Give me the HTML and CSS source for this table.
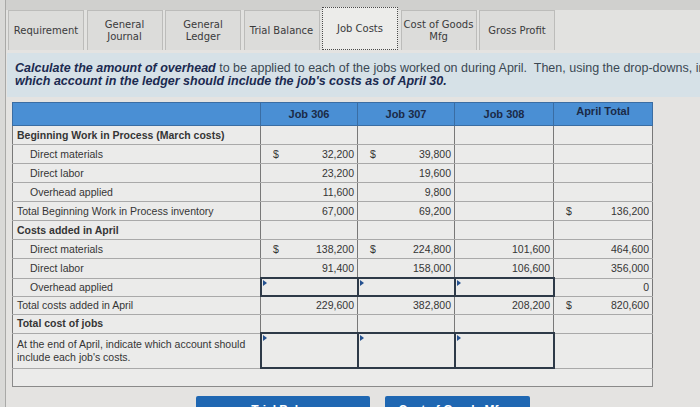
FILE: index.html
```html
<!DOCTYPE html>
<html>
<head>
<meta charset="utf-8">
<link rel="stylesheet" href="styles.css">
</head>
<body>
<div class="page">
  <div class="tabs">
    <div class="tab">Requirement</div>
    <div class="tab">General<br>Journal</div>
    <div class="tab">General<br>Ledger</div>
    <div class="tab">Trial Balance</div>
    <div class="tab active">Job Costs</div>
    <div class="tab">Cost of Goods<br>Mfg</div>
    <div class="tab">Gross Profit</div>
  </div>
  <div class="instr"><b>Calculate the amount of overhead</b> to be applied to each of the jobs worked on during April.&nbsp; Then, using the drop-downs, indicate<br><b>which account in the ledger should include the job's costs as of April 30.</b></div>
  <div class="sheet">
    <table class="grid">
      <colgroup><col class="c-lbl"><col class="c-job"><col class="c-job"><col class="c-job3"><col class="c-job3"></colgroup>
      <tr class="head"><th></th><th>Job 306</th><th>Job 307</th><th>Job 308</th><th class="total">April Total</th></tr>
      <tr><td class="lbl b">Beginning Work in Process (March costs)</td><td></td><td></td><td></td><td></td></tr>
      <tr><td class="lbl sub">Direct materials</td><td class="num"><div><span>$</span><span>32,200</span></div></td><td class="num"><div><span>$</span><span>39,800</span></div></td><td></td><td></td></tr>
      <tr><td class="lbl sub">Direct labor</td><td class="num"><div><span></span><span>23,200</span></div></td><td class="num"><div><span></span><span>19,600</span></div></td><td></td><td></td></tr>
      <tr><td class="lbl sub">Overhead applied</td><td class="num"><div><span></span><span>11,600</span></div></td><td class="num"><div><span></span><span>9,800</span></div></td><td></td><td></td></tr>
      <tr><td class="lbl">Total Beginning Work in Process inventory</td><td class="num"><div><span></span><span>67,000</span></div></td><td class="num"><div><span></span><span>69,200</span></div></td><td></td><td class="num"><div><span>$</span><span>136,200</span></div></td></tr>
      <tr><td class="lbl b">Costs added in April</td><td></td><td></td><td></td><td></td></tr>
      <tr><td class="lbl sub">Direct materials</td><td class="num"><div><span>$</span><span>138,200</span></div></td><td class="num"><div><span>$</span><span>224,800</span></div></td><td class="num"><div><span></span><span>101,600</span></div></td><td class="num"><div><span></span><span>464,600</span></div></td></tr>
      <tr><td class="lbl sub">Direct labor</td><td class="num"><div><span></span><span>91,400</span></div></td><td class="num"><div><span></span><span>158,000</span></div></td><td class="num"><div><span></span><span>106,600</span></div></td><td class="num"><div><span></span><span>356,000</span></div></td></tr>
      <tr class="inrow"><td class="lbl sub">Overhead applied</td><td class="inp"></td><td class="inp"></td><td class="inp"></td><td class="num"><div><span></span><span>0</span></div></td></tr>
      <tr class="low"><td class="lbl">Total costs added in April</td><td class="num"><div><span></span><span>229,600</span></div></td><td class="num"><div><span></span><span>382,800</span></div></td><td class="num"><div><span></span><span>208,200</span></div></td><td class="num"><div><span>$</span><span>820,600</span></div></td></tr>
      <tr class="low"><td class="lbl b">Total cost of jobs</td><td></td><td></td><td></td><td></td></tr>
      <tr class="tall"><td class="lbl">At the end of April, indicate which account should<br>include each job's costs.</td><td class="inp"></td><td class="inp"></td><td class="inp"></td><td></td></tr>
      <tr class="low"><td class="full" colspan="5"></td></tr>
    </table>
  </div>
  <div class="nav">
    <button class="btn prev">&lsaquo;&nbsp; Trial Balance</button>
    <button class="btn next">Cost of Goods Mfg &nbsp;&rsaquo;</button>
  </div>
</div>
</body>
</html>
```

FILE: styles.css
```css
html, body {
  margin: 0;
  height: 100%;
  overflow: hidden;
}
body {
  background: #d9d9d7;
  font-family: "Liberation Sans", Arial, sans-serif;
}
.page {
  margin-left: 5px;
  border-left: 1px solid #a9a9a7;
  min-height: 100%;
  background: #e4e3e1;
}
.tabs {
  display: flex;
  align-items: flex-end;
  gap: 2.5px;
  padding: 10px 0 0 2px;
  background: linear-gradient(#d0d0ce 0 10px, #e2e2e0 10px);
}
.tab {
  width: 76px;
  height: 40px;
  box-sizing: border-box;
  border: 1px solid #bcbcba;
  border-bottom: none;
  background: #dcdcda;
  display: flex;
  align-items: center;
  justify-content: center;
  text-align: center;
  font: 10px/12px "DejaVu Sans", sans-serif;
  color: #3a3a3a;
}
.tab.active {
  height: 43px;
  margin-top: -3px;
  background: #ececea;
  border: 1px dotted #4a4a4a;
}
.instr {
  margin: 3px 0 0 1px;
  height: 26px;
  padding: 9px 8px;
  background: #d6e1e7;
  font: 12.5px/13px "Liberation Sans", Arial, sans-serif;
  color: #3b4853;
  white-space: nowrap;
  overflow: hidden;
}
.instr b {
  font-style: italic;
  color: #1b2a50;
}
.sheet {
  padding: 5px 0 0 6px;
}
.grid {
  border-collapse: collapse;
  table-layout: fixed;
  width: 640px;
  font-size: 10.5px;
  color: #353535;
}
.c-lbl { width: 248px; }
.c-job { width: 97px; }
.c-job3 { width: 99px; }
.grid th {
  height: 20px;
  padding: 0;
  background: #4a8fd4;
  border: 1px solid #3a6da3;
  color: #1b2a47;
  font-size: 11px;
  font-weight: bold;
  text-align: center;
}
.grid th.total {
  vertical-align: top;
  padding-top: 2px;
}
.grid td {
  height: 18px;
  padding: 0 4px;
  background: #ebebea;
  border-top: 1px solid #a9a9a9;
  border-bottom: 1px solid #a9a9a9;
  border-left: 1px solid #787878;
  border-right: 1px solid #787878;
  white-space: nowrap;
  line-height: 13px;
}
.grid td.b { font-weight: bold; }
.grid td.sub { padding-left: 17px; }
.grid td.num { padding: 0 3px 0 12px; }
.num div {
  display: flex;
  justify-content: space-between;
}
.grid tr.inrow td { height: 16px; }
.grid tr.low td { height: 17px; }
.grid td.inp {
  position: relative;
  border: 2px solid #2e3a48;
}
.grid td.inp::before {
  content: "";
  position: absolute;
  left: 1px;
  top: 1px;
  border-left: 4px solid #24508f;
  border-top: 3px solid transparent;
  border-bottom: 3px solid transparent;
}
.grid tr.tall td { height: 33px; }
.grid td.full { border-left: 1px solid #8a8a8a; border-right: 1px solid #8a8a8a; border-bottom: 1px solid #8a8a8a; }
.nav {
  display: flex;
  gap: 15px;
  padding-left: 190px;
  margin-top: 9px;
}
.btn {
  height: 28px;
  padding: 0;
  border: none;
  border-radius: 2px;
  background: #1f67b2;
  color: #ffffff;
  font: bold 12px "Liberation Sans", Arial, sans-serif;
}
.btn.prev { width: 174px; }
.btn.next { width: 145px; }
```
